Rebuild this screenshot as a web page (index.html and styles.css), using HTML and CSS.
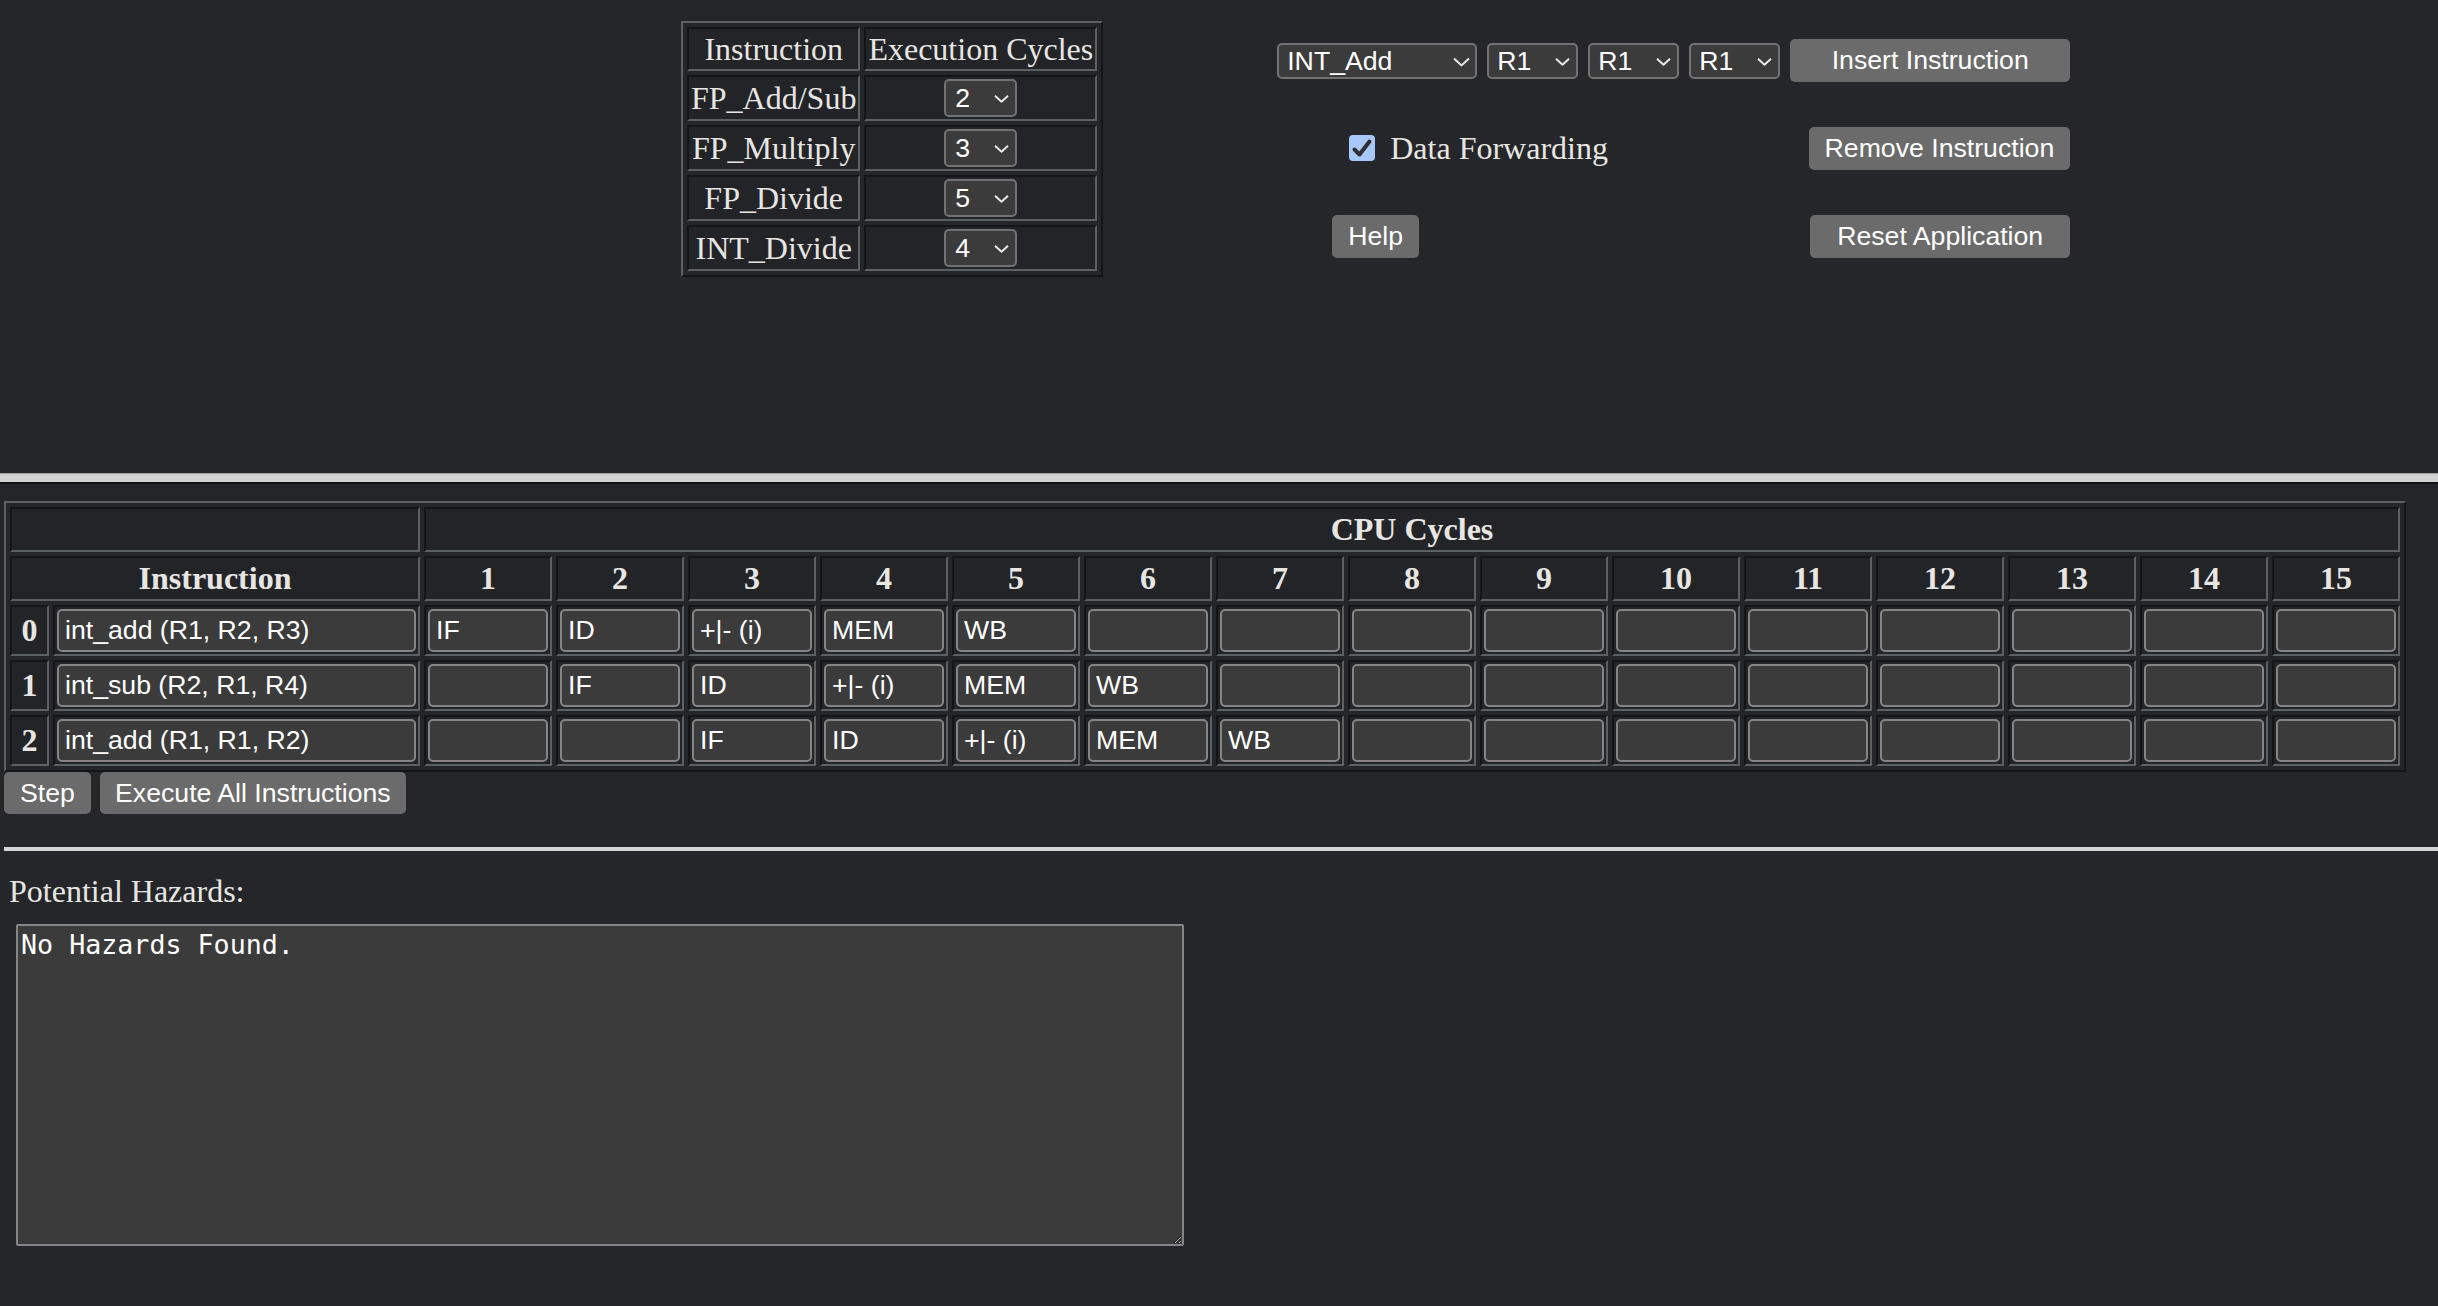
FILE: index.html
```html
<!DOCTYPE html>
<html>
<head>
<meta charset="utf-8">
<title>Pipeline Simulator</title>
<link rel="stylesheet" href="styles.css">
</head>
<body>
<div class="top">
  <table class="cfg">
    <tr><td>Instruction</td><td>Execution Cycles</td></tr>
    <tr><td>FP_Add/Sub</td><td><span class="sel sel-num"><select><option>2</option></select><svg class="chev" width="15" height="8" viewBox="0 0 15 8"><path d="M1 1 L7.5 7 L14 1"/></svg></span></td></tr>
    <tr><td>FP_Multiply</td><td><span class="sel sel-num"><select><option>3</option></select><svg class="chev" width="15" height="8" viewBox="0 0 15 8"><path d="M1 1 L7.5 7 L14 1"/></svg></span></td></tr>
    <tr><td>FP_Divide</td><td><span class="sel sel-num"><select><option>5</option></select><svg class="chev" width="15" height="8" viewBox="0 0 15 8"><path d="M1 1 L7.5 7 L14 1"/></svg></span></td></tr>
    <tr><td>INT_Divide</td><td><span class="sel sel-num"><select><option>4</option></select><svg class="chev" width="15" height="8" viewBox="0 0 15 8"><path d="M1 1 L7.5 7 L14 1"/></svg></span></td></tr>
  </table>

  <div class="controls">
    <div class="row row1">
      <span class="sel sel-op"><select><option>INT_Add</option></select><svg class="chev" width="17" height="9" viewBox="0 0 17 9"><path d="M1 1 L8.5 8 L16 1"/></svg></span>
      <span class="sel sel-reg"><select><option>R1</option></select><svg class="chev" width="15" height="8" viewBox="0 0 15 8"><path d="M1 1 L7.5 7 L14 1"/></svg></span>
      <span class="sel sel-reg"><select><option>R1</option></select><svg class="chev" width="15" height="8" viewBox="0 0 15 8"><path d="M1 1 L7.5 7 L14 1"/></svg></span>
      <span class="sel sel-reg"><select><option>R1</option></select><svg class="chev" width="15" height="8" viewBox="0 0 15 8"><path d="M1 1 L7.5 7 L14 1"/></svg></span>
      <button class="btn btn-insert">Insert Instruction</button>
    </div>
    <div class="row row2">
      <label class="fwd">
        <span class="box"><svg width="26" height="26" viewBox="0 0 26 26"><path d="M5.5 14.5 L10.5 19.5 L20.5 6.5"/></svg></span>
        <span>Data Forwarding</span>
      </label>
      <button class="btn">Remove Instruction</button>
    </div>
    <div class="row row3">
      <button class="btn btn-help">Help</button>
      <button class="btn btn-reset">Reset Application</button>
    </div>
  </div>
</div>

<div class="divider"></div>

<table class="pipe">
  <tr>
    <th colspan="2"></th>
    <th colspan="15">CPU Cycles</th>
  </tr>
  <tr>
    <th colspan="2">Instruction</th>
    <th>1</th><th>2</th><th>3</th><th>4</th><th>5</th><th>6</th><th>7</th><th>8</th><th>9</th><th>10</th><th>11</th><th>12</th><th>13</th><th>14</th><th>15</th>
  </tr>
  <tr>
    <th class="idx">0</th>
    <td><input class="ins" value="int_add (R1, R2, R3)"></td>
    <td><input class="cyc" value="IF"></td>
    <td><input class="cyc" value="ID"></td>
    <td><input class="cyc" value="+|- (i)"></td>
    <td><input class="cyc" value="MEM"></td>
    <td><input class="cyc" value="WB"></td>
    <td><input class="cyc" value=""></td>
    <td><input class="cyc" value=""></td>
    <td><input class="cyc" value=""></td>
    <td><input class="cyc" value=""></td>
    <td><input class="cyc" value=""></td>
    <td><input class="cyc" value=""></td>
    <td><input class="cyc" value=""></td>
    <td><input class="cyc" value=""></td>
    <td><input class="cyc" value=""></td>
    <td><input class="cyc" value=""></td>
  </tr>
  <tr>
    <th class="idx">1</th>
    <td><input class="ins" value="int_sub (R2, R1, R4)"></td>
    <td><input class="cyc" value=""></td>
    <td><input class="cyc" value="IF"></td>
    <td><input class="cyc" value="ID"></td>
    <td><input class="cyc" value="+|- (i)"></td>
    <td><input class="cyc" value="MEM"></td>
    <td><input class="cyc" value="WB"></td>
    <td><input class="cyc" value=""></td>
    <td><input class="cyc" value=""></td>
    <td><input class="cyc" value=""></td>
    <td><input class="cyc" value=""></td>
    <td><input class="cyc" value=""></td>
    <td><input class="cyc" value=""></td>
    <td><input class="cyc" value=""></td>
    <td><input class="cyc" value=""></td>
    <td><input class="cyc" value=""></td>
  </tr>
  <tr>
    <th class="idx">2</th>
    <td><input class="ins" value="int_add (R1, R1, R2)"></td>
    <td><input class="cyc" value=""></td>
    <td><input class="cyc" value=""></td>
    <td><input class="cyc" value="IF"></td>
    <td><input class="cyc" value="ID"></td>
    <td><input class="cyc" value="+|- (i)"></td>
    <td><input class="cyc" value="MEM"></td>
    <td><input class="cyc" value="WB"></td>
    <td><input class="cyc" value=""></td>
    <td><input class="cyc" value=""></td>
    <td><input class="cyc" value=""></td>
    <td><input class="cyc" value=""></td>
    <td><input class="cyc" value=""></td>
    <td><input class="cyc" value=""></td>
    <td><input class="cyc" value=""></td>
    <td><input class="cyc" value=""></td>
  </tr>
</table>

<div class="actions">
  <button class="btn btn-small">Step</button>
  <button class="btn btn-small btn-exec">Execute All Instructions</button>
</div>

<div class="rule"></div>

<div class="label">Potential Hazards:</div>
<textarea class="hazards">No Hazards Found.</textarea>
</body>
</html>
```

FILE: styles.css
```css
body {
  margin: 0;
  background: #252629;
  color: #e8e6e3;
  font-family: "Liberation Serif", "Times New Roman", serif;
  font-size: 32px;
}

/* ---------- top area ---------- */
.top {
  display: flex;
  align-items: flex-start;
  height: 473px;
  box-sizing: border-box;
  padding: 21px 0 0 681px;
}

table.cfg {
  border-collapse: separate;
  border-spacing: 4px;
  border: 2px solid;
  border-color: #5b6163 #141517 #141517 #5b6163;
}

.cfg td {
  border: 2px solid;
  border-color: #141517 #5b6163 #5b6163 #141517;
  padding: 2px;
  text-align: center;
  vertical-align: middle;
  line-height: 36px;
  background: #232427;
}

/* select boxes */
.sel {
  position: relative;
  display: inline-block;
  vertical-align: middle;
}

.sel select {
  appearance: none;
  -webkit-appearance: none;
  display: block;
  width: 100%;
  box-sizing: border-box;
  margin: 0;
  background: #3b3b3b;
  color: #ffffff;
  border: 2px solid #727272;
  border-radius: 5px;
  font-family: "Liberation Sans", Arial, sans-serif;
  font-size: 26.67px;
  padding: 0 0 0 8px;
  outline: none;
}

.sel .chev {
  position: absolute;
  right: 8px;
  top: 50%;
  transform: translateY(-40%);
  pointer-events: none;
}

.sel .chev path {
  fill: none;
  stroke: #e6e6e6;
  stroke-width: 2;
}

.sel-num {
  display: block;
  width: 73px;
  margin: 0 auto;
}
.sel-num select {
  height: 38px;
  padding-left: 9px;
}

.sel-op {
  width: 200px;
}
.sel-op .chev {
  right: 7px;
}
.sel-op select,
.sel-reg select {
  height: 36px;
}

.sel-reg {
  width: 91px;
}

/* controls */
.controls {
  margin-left: 174px;
  padding-top: 18px;
  width: 793px;
  display: flex;
  flex-direction: column;
  gap: 45px;
}

.row {
  display: flex;
  align-items: center;
  height: 43px;
}

.row1 {
  gap: 10px;
}

.row2,
.row3 {
  justify-content: space-between;
}

.btn {
  font-family: "Liberation Sans", Arial, sans-serif;
  font-size: 26.67px;
  color: #ffffff;
  background: #6b6b6b;
  border: 0;
  border-radius: 5px;
  height: 43px;
  padding: 0 16px;
  margin: 0;
  white-space: nowrap;
}

.btn-insert {
  width: 280px;
}

.btn-reset {
  width: 260px;
}

.btn-help {
  margin-left: 55px;
}

.fwd {
  display: flex;
  align-items: center;
  gap: 15px;
  margin-left: 72px;
  line-height: 37px;
}

.box {
  display: block;
  width: 26px;
  height: 26px;
  border-radius: 4px;
  background: #a8c7fa;
  margin-bottom: 2px;
}

.box svg {
  display: block;
}

.box path {
  fill: none;
  stroke: #2e2f31;
  stroke-width: 4;
  stroke-linecap: round;
  stroke-linejoin: round;
}

/* ---------- divider ---------- */
.divider {
  height: 8px;
  background: #d1d1d1;
  border-top: 1px solid #a3a3a3;
  border-bottom: 2px solid #111214;
}

/* ---------- pipeline table ---------- */
table.pipe {
  margin: 17px 0 0 4px;
  border-collapse: separate;
  border-spacing: 4px;
  border: 2px solid;
  border-color: #5b6163 #141517 #141517 #5b6163;
}

.pipe th,
.pipe td {
  border: 2px solid;
  border-color: #141517 #5b6163 #5b6163 #141517;
  padding: 2px;
  background: #232427;
  vertical-align: middle;
}

.pipe th {
  font-weight: bold;
  line-height: 37px;
  text-align: center;
}

.pipe th.idx {
  width: 31px;
  padding: 2px;
}

.pipe input {
  display: block;
  box-sizing: border-box;
  height: 43px;
  margin: 0;
  background: #3b3b3b;
  color: #ffffff;
  border: 2px solid #858585;
  border-radius: 5px;
  font-family: "Liberation Sans", Arial, sans-serif;
  font-size: 26.67px;
  padding: 0 6px;
  outline: none;
}

.pipe input.ins {
  width: 359px;
}

.pipe input.cyc {
  width: 120px;
}

/* ---------- actions ---------- */
.actions {
  display: flex;
  gap: 9px;
  margin-left: 4px;
}

.btn-small {
  height: 42px;
}

.btn-exec {
  width: 306px;
  padding: 0;
}

.rule {
  margin: 33px 0 0 4px;
  height: 4px;
  background: #d6d6d6;
}

.label {
  margin: 22px 0 0 9px;
  line-height: 37px;
}

.hazards {
  display: block;
  margin: 14px 0 0 16px;
  width: 1168px;
  height: 322px;
  box-sizing: border-box;
  background: #3b3b3b;
  color: #ffffff;
  border: 2px solid #858585;
  border-radius: 2px;
  font-family: "DejaVu Sans Mono", "Liberation Mono", monospace;
  font-size: 26.67px;
  padding: 3px 3px;
  outline: none;
}
```
